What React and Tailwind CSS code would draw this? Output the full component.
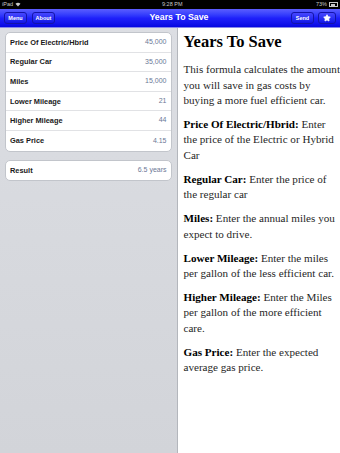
import { Star } from 'lucide-react'

const fields = [
  ['Price Of Electric/Hbrid', '45,000'],
  ['Regular Car', '35,000'],
  ['Miles', '15,000'],
  ['Lower Mileage', '21'],
  ['Higher Mileage', '44'],
  ['Gas Price', '4.15'],
]

const help = [
  ['Price Of Electric/Hbrid:', ['Enter', 'the price of the Electric or Hybrid', 'Car']],
  ['Regular Car:', ['Enter the price of', 'the regular car']],
  ['Miles:', ['Enter the annual miles you', 'expect to drive.']],
  ['Lower Mileage:', ['Enter the miles', 'per gallon of the less efficient car.']],
  ['Higher Mileage:', ['Enter the Miles', 'per gallon of the more efficient', 'care.']],
  ['Gas Price:', ['Enter the expected', 'average gas price.']],
]

function BarButton({ children, className = '' }) {
  return (
    <div
      className={`h-[12px] flex items-center justify-center rounded-[3px] border border-[#1414a8] bg-gradient-to-b from-[#4646ff] to-[#1010e6] text-white text-[5.5px] font-bold ${className}`}
    >
      {children}
    </div>
  )
}

function Row({ label, value, last }) {
  return (
    <div className={`h-[19.6px] flex items-center justify-between px-[4px] ${last ? '' : 'border-b border-[#e1e2e5]'}`}>
      <span className="text-[7.4px] font-bold text-[#1a1a1a]">{label}</span>
      <span className="text-[7px] text-[#6b7896]">{value}</span>
    </div>
  )
}

export default function App() {
  return (
    <div className="w-[340px] h-[453px] flex flex-col overflow-hidden" style={{ fontFamily: '"Liberation Sans", Arial, sans-serif' }}>
      {/* status bar */}
      <div className="h-[9px] bg-black flex items-center justify-between px-[2px] text-[5.5px] text-[#c8c8c8] relative">
        <div className="flex items-center gap-[2px]">
          <span>iPad</span>
          <svg width="6" height="5" viewBox="0 0 12 10">
            <path d="M6 9 L1 3.5 A7.5 7.5 0 0 1 11 3.5 Z" fill="#c8c8c8" />
          </svg>
        </div>
        <span className="absolute left-[162px]">9:28 PM</span>
        <div className="flex items-center gap-[2px]">
          <span>73%</span>
          <div className="w-[9px] h-[5px] border border-[#c8c8c8] p-[0.5px] flex">
            <div className="w-[70%] bg-[#c8c8c8]" />
          </div>
        </div>
      </div>

      {/* nav bar */}
      <div className="h-[19px] bg-gradient-to-b from-[#5c5cff] via-[#2020fb] to-[#0606e2] border-b border-[#8888e8] flex items-center px-[4px] relative">
        <BarButton className="w-[23px]">Menu</BarButton>
        <BarButton className="w-[23px] ml-[5px]">About</BarButton>
        <div className="flex-1 text-center text-white font-bold text-[8.8px] pl-[12px]">Years To Save</div>
        <BarButton className="w-[23px]">Send</BarButton>
        <BarButton className="w-[18px] ml-[4px]">
          <Star className="w-[8px] h-[8px]" fill="white" strokeWidth={2} />
        </BarButton>
      </div>

      <div className="flex-1 flex">
        {/* left panel */}
        <div className="w-[178px] bg-gradient-to-b from-[#dcdee3] to-[#d2d4d9] border-r border-[#b3b6bc] px-[5px] pt-[4px]">
          <div className="bg-white rounded-[5px] border border-[#c2c5cb]">
            {fields.map(([l, v], i) => (
              <Row key={l} label={l} value={v} last={i === fields.length - 1} />
            ))}
          </div>
          <div className="bg-white rounded-[5px] border border-[#c2c5cb] mt-[8px]">
            <Row label="Result" value="6.5 years" last />
          </div>
        </div>

        {/* right panel */}
        <div
          className="flex-1 bg-white pl-[6px] pt-[4px] text-[#262626]"
          style={{ fontFamily: '"Liberation Serif", "Times New Roman", serif' }}
        >
          <h1 className="text-[16.5px] font-bold leading-[20px] text-black">Years To Save</h1>
          <p className="text-[11.1px] leading-[15.5px] mt-[10px] whitespace-nowrap">
            This formula calculates the amount
            <br />
            you will save in gas costs by
            <br />
            buying a more fuel efficient car.
          </p>
          {help.map(([title, lines]) => (
            <p key={title} className="text-[11.1px] leading-[15.5px] mt-[8.4px] whitespace-nowrap">
              <b className="text-black">{title}</b> {lines[0]}
              {lines.slice(1).map((ln) => (
                <span key={ln}>
                  <br />
                  {ln}
                </span>
              ))}
            </p>
          ))}
        </div>
      </div>
    </div>
  )
}
